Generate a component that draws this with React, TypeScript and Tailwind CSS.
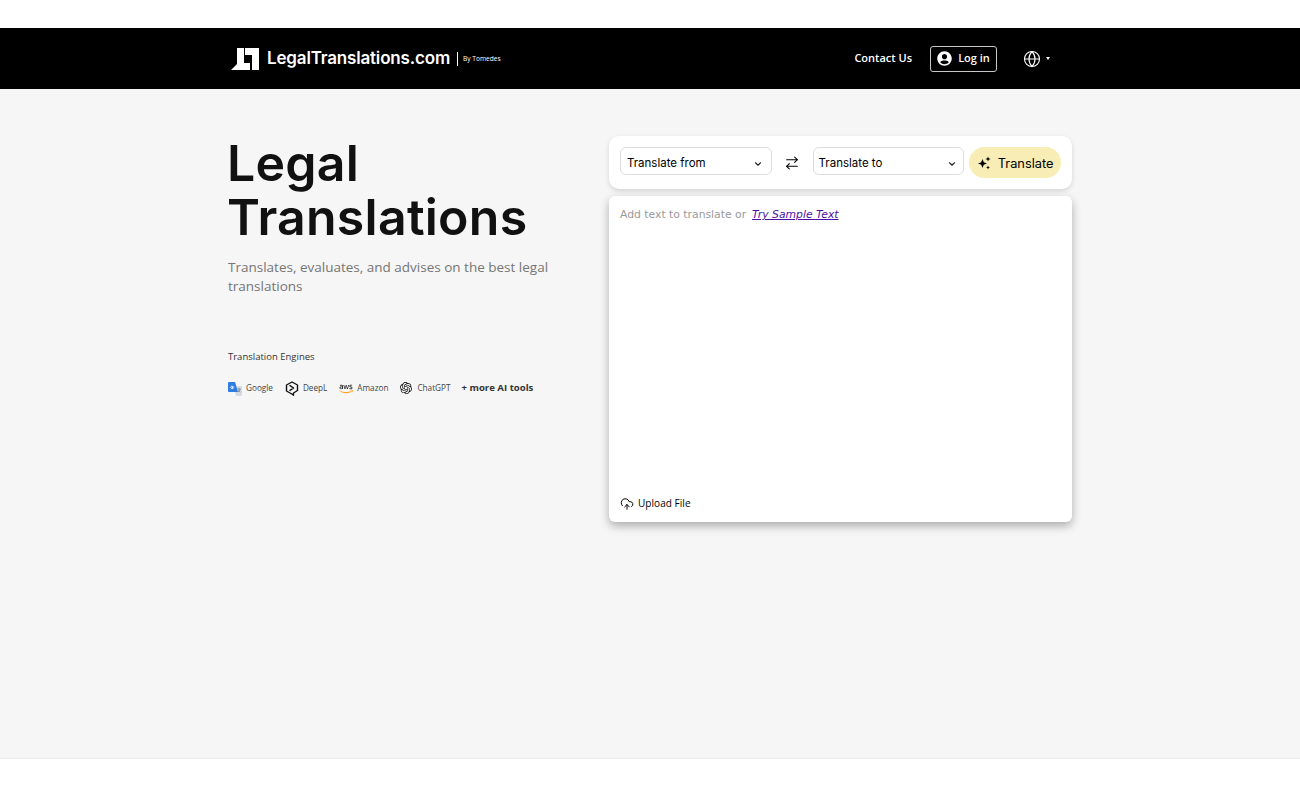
import { ChevronDown, ArrowRightLeft, CloudUpload, Globe } from "lucide-react";
import { FaUserCircle, FaAws } from "react-icons/fa";
import { SiOpenai } from "react-icons/si";

const poppins = "font-['Inter','Noto_Sans',sans-serif]";
const openSans = "font-['Open_Sans','Noto_Sans',sans-serif]";

function LogoMark() {
  return (
    <svg viewBox="0 0 28 22" className="w-[28px] h-[22px]" fill="#fff">
      <path d="M6 0h7v15h6v7H0l6-6z" />
      <path d="M14 0h14v22h-7V7h-7z" />
    </svg>
  );
}

function GoogleIcon() {
  return (
    <svg viewBox="0 0 14 14" className="w-[14px] h-[14px]">
      <path d="M6 4h7a1 1 0 0 1 1 1v8a1 1 0 0 1-1 1H8z" fill="#d5dbe3" />
      <path d="M1 0h6l3 10H1a1 1 0 0 1-1-1V1a1 1 0 0 1 1-1z" fill="#2f7de1" />
      <path d="M6.2 5H4.2v1h1a1.3 1.3 0 1 1-.4-1.6" fill="none" stroke="#fff" strokeWidth="0.9" />
      <path d="M9.5 7h3M11 6v1M10 10c1.2-.7 2-1.7 2.3-3M10.4 8.2c.5.8 1.1 1.4 2 1.8" fill="none" stroke="#6b7784" strokeWidth="0.7" />
    </svg>
  );
}

function DeepLIcon() {
  return (
    <svg viewBox="0 0 14 15" className="w-[14px] h-[15px]" fill="none" stroke="#111" strokeWidth="1.4" strokeLinejoin="round">
      <path d="M7 1l5.5 3v5.5L8.5 12v2.2L6.8 13 1.5 10V4z" />
      <path d="M5 4.6L8.6 7 5 9.4" strokeLinecap="round" />
    </svg>
  );
}

function SparkleIcon() {
  return (
    <svg viewBox="0 0 14 14" className="w-[14px] h-[14px]" fill="#000">
      <path d="M5.5 3l1.3 3.2L10 7.5 6.8 8.8 5.5 12 4.2 8.8 1 7.5l3.2-1.3z" />
      <path d="M11 0.5l.7 1.8 1.8.7-1.8.7-.7 1.8-.7-1.8-1.8-.7 1.8-.7z" />
      <path d="M11 9.5l.6 1.4 1.4.6-1.4.6-.6 1.4-.6-1.4-1.4-.6 1.4-.6z" />
    </svg>
  );
}

function AwsGradient() {
  return (
    <svg width="0" height="0" className="absolute">
      <defs>
        <linearGradient id="awsFill" x1="0" y1="0" x2="0" y2="1">
          <stop offset="0.6" stopColor="#111" />
          <stop offset="0.6" stopColor="#f90" />
        </linearGradient>
      </defs>
    </svg>
  );
}

const engines = [
  { name: "Google", icon: <GoogleIcon />, gap: "gap-[4px]" },
  { name: "DeepL", icon: <DeepLIcon />, gap: "gap-[4px]" },
  { name: "Amazon", icon: <FaAws fill="url(#awsFill)" className="w-[14px] h-[14px]" />, gap: "gap-[4px]" },
  { name: "ChatGPT", icon: <SiOpenai className="w-[12px] h-[12px] text-[#111]" />, gap: "gap-[5px]" },
];

export default function App() {
  return (
    <div className="min-h-[788px] bg-white flex flex-col">
      <AwsGradient />
      {/* Header */}
      <header className="mt-[28px] h-[61px] bg-black flex justify-center">
        <div className="w-[844px] flex items-center pl-[3px] pr-[22px]">
          <LogoMark />
          <span className="ml-[8px] text-white text-[17px] font-semibold tracking-[-0.17px] font-['Inter',sans-serif]">
            LegalTranslations.com
          </span>
          <span className="ml-[7px] w-px h-[14px] bg-white" />
          <span className={`ml-[5px] text-white text-[6.6px] ${openSans}`}>By Tomedes</span>
          <a className={`ml-auto text-white text-[11px] font-semibold ${openSans}`}>Contact Us</a>
          <button className={`ml-[18px] w-[67px] h-[26px] border border-[#c8c8c8] rounded-[3px] flex items-center justify-center gap-[6px] text-white text-[11px] font-semibold ${openSans}`}>
            <FaUserCircle className="w-[15px] h-[15px]" />
            Log in
          </button>
          <Globe className="ml-[26px] w-[18px] h-[18px] text-white" strokeWidth={1.5} />
          <span className="ml-[5px] w-0 h-0 border-x-[2.5px] border-x-transparent border-t-[3px] border-t-white" />
        </div>
      </header>

      {/* Main */}
      <main className="h-[670px] bg-[#f6f6f6] border-b border-[#ebebeb] flex justify-center pt-[47px]">
        <div className="w-[844px] flex items-start">
          <div className="w-[381px]">
            <h1 className={`-ml-[1px] text-[#111] text-[50px] leading-[54px] font-semibold tracking-[0.25px] ${poppins}`}>
              Legal
              <br />
              Translations
            </h1>
            <p className={`mt-[14px] w-[340px] text-[#757575] text-[13.5px] leading-[19px] ${openSans}`}>
              Translates, evaluates, and advises on the best legal translations
            </p>
            <h2 className={`mt-[54px] text-[#333] text-[9.5px] leading-[14px] ${openSans}`}>Translation Engines</h2>
            <div className="mt-[17px] flex items-center gap-[12px]">
              {engines.map((engine) => (
                <div key={engine.name} className={`flex items-center ${engine.gap}`}>
                  {engine.icon}
                  <span className={`text-[#444] text-[8.2px] ${openSans}`}>{engine.name}</span>
                </div>
              ))}
              <span className={`-ml-[1px] text-[#333] text-[9.6px] font-bold ${openSans}`}>+ more AI tools</span>
            </div>
          </div>

          <div className="w-[463px] flex flex-col gap-[7px]">
            {/* Toolbar */}
            <div className="h-[53px] bg-white rounded-[10px] shadow-[0_2px_5px_rgba(0,0,0,0.14)] flex items-center px-[11px]">
              <div className="mb-[3px] w-[152px] h-[28px] border border-[#dcdcdc] rounded-[6px] flex items-center justify-between pt-[5px] pl-[6px] pr-[8px]">
                <span className={`text-black text-[11.5px] ${poppins}`}>Translate from</span>
                <ChevronDown className="w-[10px] h-[10px] text-[#222]" strokeWidth={2.6} />
              </div>
              <ArrowRightLeft className="ml-[12px] mr-[13px] w-[16px] h-[16px] text-black" strokeWidth={1.6} />
              <div className="mb-[3px] w-[152px] h-[28px] border border-[#dcdcdc] rounded-[6px] flex items-center justify-between pt-[5px] pl-[5px] pr-[6px]">
                <span className={`text-black text-[11.5px] ${poppins}`}>Translate to</span>
                <ChevronDown className="w-[10px] h-[10px] text-[#222]" strokeWidth={2.6} />
              </div>
              <button className={`ml-[5px] w-[92px] h-[31px] bg-[#f8edb4] rounded-full flex items-center justify-center gap-[7px] text-black text-[12.8px] ${poppins}`}>
                <SparkleIcon />
                <span className="translate-y-[1px]">Translate</span>
              </button>
            </div>

            {/* Text area */}
            <div className="h-[326px] bg-white rounded-[6px] shadow-[0_4px_10px_rgba(0,0,0,0.3)] flex flex-col justify-between px-[11px] pt-[11px] pb-[11px]">
              <p className="text-[10.8px] leading-[15px] text-[#9a9a9a] font-['DejaVu_Sans',sans-serif]">
                Add text to translate or
                <a className="ml-[6px] italic underline text-[#4b10a8]">Try Sample Text</a>
              </p>
              <button className={`flex items-center gap-[4px] text-black text-[10px] font-medium tracking-[0.05px] ${openSans}`}>
                <CloudUpload className="w-[14px] h-[14px]" strokeWidth={1.7} />
                Upload File
              </button>
            </div>
          </div>
        </div>
      </main>
    </div>
  );
}
